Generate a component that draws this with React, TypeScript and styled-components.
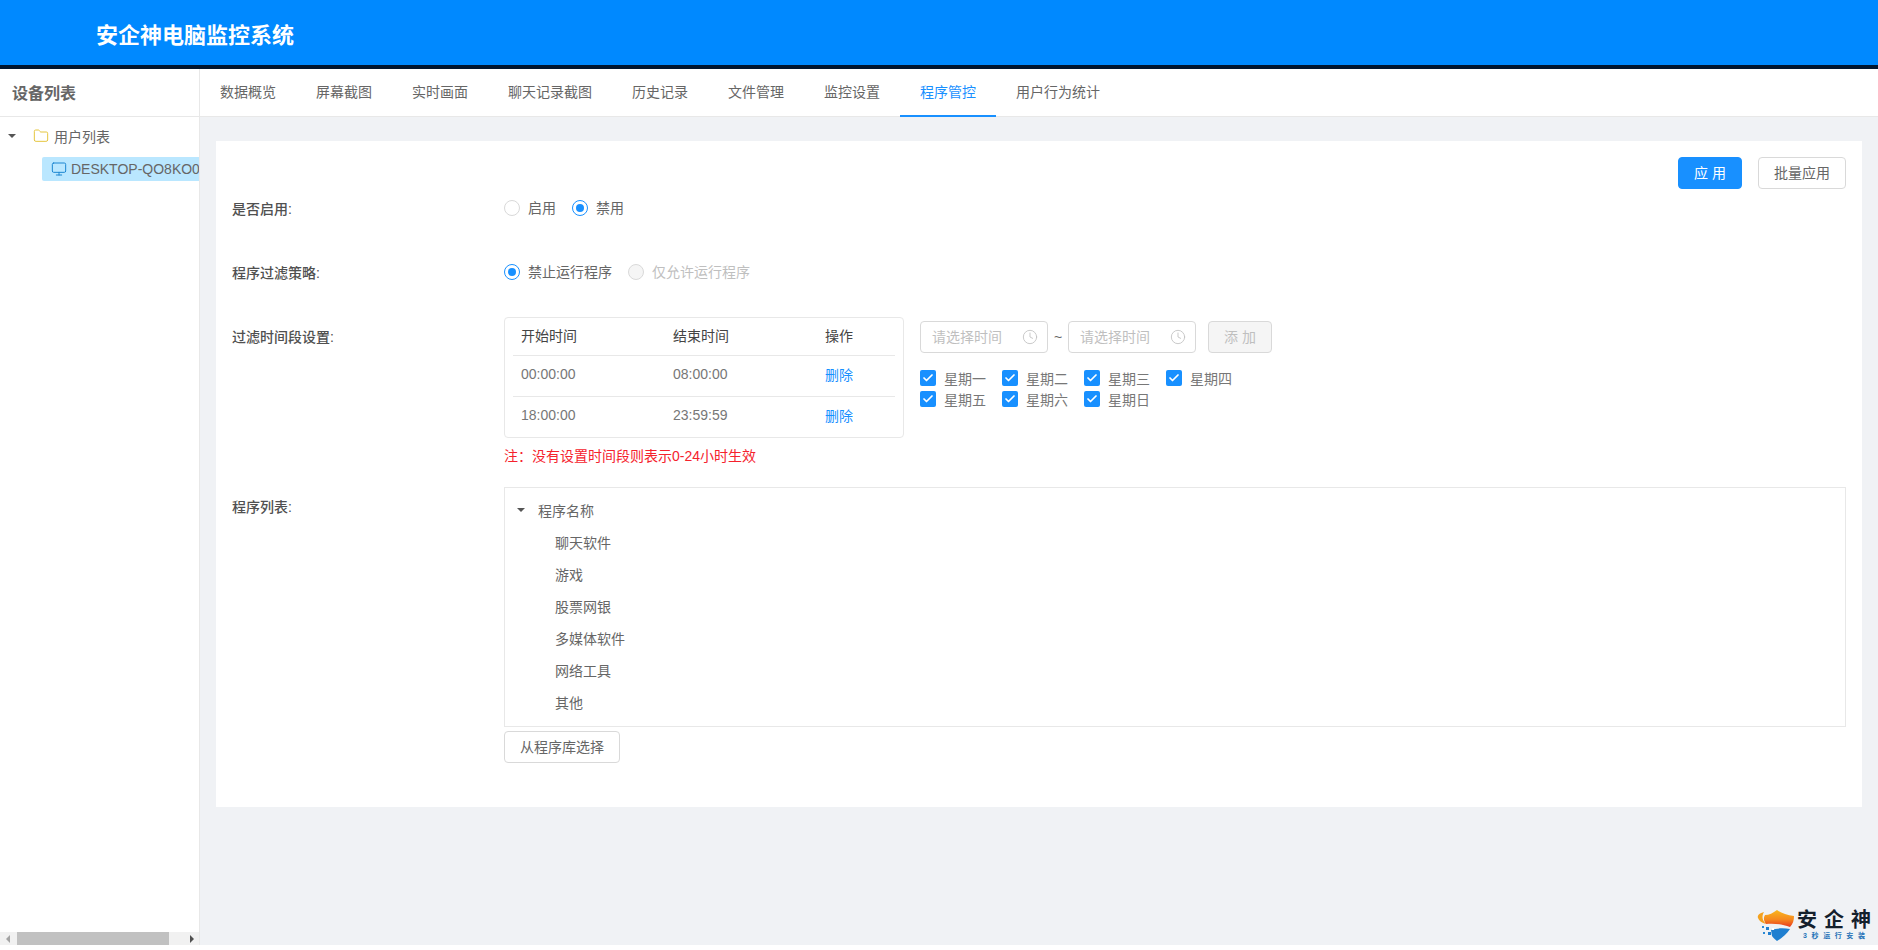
import styled, { createGlobalStyle } from "styled-components";
import { Check, Clock, Folder, Monitor } from "lucide-react";

const GlobalStyle = createGlobalStyle`
  html, body {
    margin: 0;
    padding: 0;
    background: #ffffff;
    overflow: hidden;
  }
  * {
    box-sizing: border-box;
  }
  body {
    font-family: "Liberation Sans", "Noto Sans CJK SC", sans-serif;
    font-size: 14px;
    color: #666666;
  }
`;

const Page = styled.div`
  display: flex;
  flex-direction: column;
  width: 1878px;
  height: 945px;
  position: relative;
`;

const Header = styled.header`
  height: 69px;
  flex: none;
  background: #0089ff;
  border-bottom: 4px solid #00152f;
  padding-left: 96px;
  display: flex;
  align-items: center;
  color: #ffffff;
  font-size: 22px;
  font-weight: 700;
`;

const Body = styled.div`
  flex: 1;
  display: flex;
  min-height: 0;
`;

const Sidebar = styled.aside`
  width: 200px;
  flex: none;
  display: flex;
  flex-direction: column;
  border-right: 1px solid #e8e8e8;
  background: #ffffff;
`;

const SideTitle = styled.div`
  height: 48px;
  flex: none;
  padding: 0 0 2px 12px;
  display: flex;
  align-items: center;
  border-bottom: 1px solid #e8e8e8;
  color: #666666;
  font-size: 16px;
  font-weight: 700;
`;

const Tree = styled.div`
  flex: 1;
  overflow: hidden;
  padding-top: 6px;
`;

const TreeRoot = styled.div`
  height: 26px;
  display: flex;
  align-items: center;
  padding-left: 8px;
  white-space: nowrap;
`;

const Caret = styled.span`
  width: 0;
  height: 0;
  flex: none;
  border-left: 4px solid transparent;
  border-right: 4px solid transparent;
  border-top: 4px solid #555555;
`;

const TreeSelected = styled.div`
  height: 24px;
  margin: 8px 0 0 42px;
  padding-left: 9px;
  display: flex;
  align-items: center;
  gap: 4px;
  background: #bae7ff;
  border-radius: 2px 0 0 2px;
  white-space: nowrap;
  overflow: hidden;
`;

const FolderIcon = styled(Folder)`
  margin: 0 5px 0 17px;
  flex: none;
  color: #e5c63f;
`;

const MonitorIcon = styled(Monitor)`
  flex: none;
  color: #1c86d1;
`;

const HScroll = styled.div`
  height: 13px;
  flex: none;
  background: #f1f1f1;
  display: flex;
  align-items: center;
`;

const ScrollThumb = styled.div`
  width: 152px;
  height: 13px;
  background: #c1c1c1;
`;

const ScrollArrow = styled.span<{ $right?: boolean }>`
  width: 0;
  height: 0;
  margin: ${(p) => (p.$right ? "0 5px 0 auto" : "0 7px 0 6px")};
  border-top: 4px solid transparent;
  border-bottom: 4px solid transparent;
  ${(p) =>
    p.$right
      ? "border-left: 4px solid #505050;"
      : "border-right: 4px solid #a3a3a3;"}
`;

const Main = styled.main`
  flex: 1;
  min-width: 0;
  background: #f0f2f5;
  display: flex;
  flex-direction: column;
`;

const Tabs = styled.nav`
  height: 48px;
  flex: none;
  display: flex;
  background: #ffffff;
  border-bottom: 1px solid #e8e8e8;
`;

const Tab = styled.div<{ $active?: boolean }>`
  height: 48px;
  padding: 0 20px 2px;
  display: flex;
  align-items: center;
  color: ${(p) => (p.$active ? "#1890ff" : "#666666")};
  border-bottom: 2px solid ${(p) => (p.$active ? "#1890ff" : "transparent")};
`;

const Card = styled.section`
  margin: 24px 16px 0 16px;
  height: 666px;
  background: #ffffff;
  padding: 16px 16px 0;
`;

const Toolbar = styled.div`
  display: flex;
  justify-content: flex-end;
  gap: 16px;
  height: 32px;
`;

const Button = styled.button<{ $primary?: boolean; $disabled?: boolean }>`
  height: 32px;
  padding: 0 15px 3px;
  border-radius: 4px;
  border: 1px solid ${(p) => (p.$primary ? "#1890ff" : "#d9d9d9")};
  background: ${(p) =>
    p.$primary ? "#1890ff" : p.$disabled ? "#f5f5f5" : "#ffffff"};
  color: ${(p) =>
    p.$primary ? "#ffffff" : p.$disabled ? "#bfbfbf" : "#666666"};
  font-family: inherit;
  font-size: 14px;
  white-space: nowrap;
`;

const Row = styled.div<{ $top: number }>`
  display: grid;
  grid-template-columns: 272px 1fr;
  margin-top: ${(p) => p.$top}px;
`;

const Label = styled.div<{ $tall?: boolean }>`
  height: ${(p) => (p.$tall ? "38px" : "32px")};
  display: flex;
  align-items: center;
  color: #505050;
  font-weight: 500;
  font-size: 14px;
`;

const Options = styled.div`
  display: flex;
  align-items: center;
  height: 32px;
  gap: 16px;
`;

const Option = styled.label<{ $disabled?: boolean }>`
  display: flex;
  align-items: center;
  gap: 8px;
  padding-bottom: 2px;
  color: ${(p) => (p.$disabled ? "#bfbfbf" : "#666666")};
`;

const Radio = styled.span<{ $checked?: boolean; $disabled?: boolean }>`
  width: 16px;
  height: 16px;
  margin-top: 2px;
  border-radius: 50%;
  flex: none;
  border: 1px solid ${(p) => (p.$checked ? "#1890ff" : "#d9d9d9")};
  background: ${(p) => (p.$disabled ? "#f5f5f5" : "#ffffff")};
  display: flex;
  align-items: center;
  justify-content: center;
  &::after {
    content: "";
    width: 8px;
    height: 8px;
    border-radius: 50%;
    background: ${(p) => (p.$checked ? "#1890ff" : "transparent")};
  }
`;

const TimeArea = styled.div`
  display: flex;
  gap: 16px;
`;

const TableBox = styled.div`
  width: 400px;
  height: 121px;
  border: 1px solid #e8e8e8;
  border-radius: 4px;
  padding: 0 8px;
`;

const TableRow = styled.div<{ $head?: boolean }>`
  display: grid;
  grid-template-columns: 152px 152px 1fr;
  align-items: center;
  height: ${(p) => (p.$head ? "37px" : "41px")};
  padding: 0 0 ${(p) => (p.$head ? "3px" : "4px")} 8px;
  color: ${(p) => (p.$head ? "#444444" : "#777777")};
  & + & {
    border-top: 1px solid #e8e8e8;
  }
`;

const DeleteLink = styled.a`
  color: #1890ff;
`;

const Note = styled.div`
  margin-top: 8px;
  height: 20px;
  line-height: 20px;
  color: #f5222d;
`;

const Schedule = styled.div`
  padding-top: 4px;
`;

const PickerRow = styled.div`
  display: flex;
  align-items: center;
`;

const Picker = styled.div`
  width: 128px;
  height: 32px;
  border: 1px solid #d9d9d9;
  border-radius: 4px;
  padding: 0 9px 3px 11px;
  display: flex;
  align-items: center;
  justify-content: space-between;
  color: #bfbfbf;
`;

const ClockIcon = styled(Clock)`
  margin-top: 3px;
`;

const Tilde = styled.span`
  width: 20px;
  text-align: center;
  color: #666666;
`;

const AddButton = styled(Button)`
  margin-left: 12px;
  width: 64px;
  padding: 0 0 3px;
`;

const Days = styled.div`
  width: 340px;
  margin-top: 15px;
  display: flex;
  flex-wrap: wrap;
  row-gap: 1px;
`;

const Day = styled.label`
  width: 82px;
  height: 20px;
  display: flex;
  align-items: center;
  gap: 8px;
  color: #777777;
`;

const Checkbox = styled.span`
  width: 16px;
  height: 16px;
  flex: none;
  border-radius: 2px;
  background: #1890ff;
  color: #ffffff;
  display: flex;
  align-items: center;
  justify-content: center;
`;

const ListBox = styled.div`
  height: 240px;
  border: 1px solid #e8e8e8;
  padding-top: 6px;
`;

const ListHead = styled.div`
  height: 32px;
  padding-left: 12px;
  display: flex;
  align-items: center;
  gap: 13px;
`;

const ListItem = styled.div`
  height: 32px;
  padding-left: 50px;
  display: flex;
  align-items: center;
`;

const PickButton = styled(Button)`
  display: block;
  margin-top: 4px;
`;

const Brand = styled.div`
  position: absolute;
  right: 7px;
  bottom: 4px;
  display: flex;
  align-items: flex-start;
  gap: 3px;
`;

const BrandText = styled.div`
  display: flex;
  flex-direction: column;
  align-items: center;
  width: 74px;
`;

const BrandName = styled.div`
  color: #14202c;
  font-size: 20px;
  line-height: 22px;
  font-weight: 700;
  letter-spacing: 7px;
  margin-right: -7px;
`;

const BrandSlogan = styled.div`
  color: #2673b8;
  font-size: 7px;
  line-height: 10px;
  letter-spacing: 4.6px;
  margin-right: -4.6px;
  font-weight: 700;
`;

const tabs = ["数据概览", "屏幕截图", "实时画面", "聊天记录截图", "历史记录", "文件管理", "监控设置", "程序管控", "用户行为统计"];
const days = ["星期一", "星期二", "星期三", "星期四", "星期五", "星期六", "星期日"];
const programs = ["聊天软件", "游戏", "股票网银", "多媒体软件", "网络工具", "其他"];
const periods = [
  ["00:00:00", "08:00:00"],
  ["18:00:00", "23:59:59"],
];

const BrandLogo = () => (
  <svg width="37" height="32" viewBox="0 0 37 32">
    <defs>
      <linearGradient id="shieldTop" x1="0" y1="0" x2="0" y2="1">
        <stop offset="0" stopColor="#f9b81e" />
        <stop offset="0.55" stopColor="#f68a1f" />
        <stop offset="1" stopColor="#e9381f" />
      </linearGradient>
    </defs>
    <path d="M8 6 C12 6 16 4 20 1 C24 4 30 6 37 7 C37 11 36 15 33 18 C25 15 16 14 9 15 C7 12 6 9 8 6 Z" fill="url(#shieldTop)" />
    <path d="M7 3 C3 4 0 6 1 9 C2 12 5 14 9 15 C6 12 4 8 7 3 Z" fill="#f4a21f" />
    <path d="M14 21 C20 19 27 19 33 20 C30 25 25 29 20 32 C18 30 16 29 15 27 Z" fill="#1f7fd0" />
    <rect x="5" y="17" width="2" height="2" fill="#2b8ad6" />
    <rect x="9" y="18" width="3" height="3" fill="#1f7fd0" />
    <rect x="6" y="23" width="2" height="2" fill="#2b8ad6" />
    <rect x="11" y="23" width="3" height="3" fill="#1f7fd0" />
    <rect x="15" y="19" width="2" height="2" fill="#ffffff" />
  </svg>
);

const App = () => {
  return (
    <Page>
      <GlobalStyle />
      <Header>安企神电脑监控系统</Header>
      <Body>
        <Sidebar>
          <SideTitle>设备列表</SideTitle>
          <Tree>
            <TreeRoot>
              <Caret />
              <FolderIcon size={16} strokeWidth={1.5} />
              用户列表
            </TreeRoot>
            <TreeSelected>
              <MonitorIcon size={16} strokeWidth={1.5} />
              DESKTOP-QO8KO0JQ
            </TreeSelected>
          </Tree>
          <HScroll>
            <ScrollArrow />
            <ScrollThumb />
            <ScrollArrow $right />
          </HScroll>
        </Sidebar>
        <Main>
          <Tabs>
            {tabs.map((t) => (
              <Tab key={t} $active={t === "程序管控"}>{t}</Tab>
            ))}
          </Tabs>
          <Card>
            <Toolbar>
              <Button $primary>应 用</Button>
              <Button>批量应用</Button>
            </Toolbar>
            <Row $top={3}>
              <Label>是否启用:</Label>
              <Options>
                <Option><Radio />启用</Option>
                <Option><Radio $checked />禁用</Option>
              </Options>
            </Row>
            <Row $top={32}>
              <Label>程序过滤策略:</Label>
              <Options>
                <Option><Radio $checked />禁止运行程序</Option>
                <Option $disabled><Radio $disabled />仅允许运行程序</Option>
              </Options>
            </Row>
            <Row $top={29}>
              <Label $tall>过滤时间段设置:</Label>
              <div>
                <TimeArea>
                  <TableBox>
                    <TableRow $head>
                      <span>开始时间</span>
                      <span>结束时间</span>
                      <span>操作</span>
                    </TableRow>
                    {periods.map(([from, to]) => (
                      <TableRow key={from}>
                        <span>{from}</span>
                        <span>{to}</span>
                        <DeleteLink>删除</DeleteLink>
                      </TableRow>
                    ))}
                  </TableBox>
                  <Schedule>
                    <PickerRow>
                      <Picker>请选择时间<ClockIcon size={16} strokeWidth={1.25} /></Picker>
                      <Tilde>~</Tilde>
                      <Picker>请选择时间<ClockIcon size={16} strokeWidth={1.25} /></Picker>
                      <AddButton $disabled>添 加</AddButton>
                    </PickerRow>
                    <Days>
                      {days.map((d) => (
                        <Day key={d}>
                          <Checkbox><Check size={12} strokeWidth={3.5} /></Checkbox>
                          {d}
                        </Day>
                      ))}
                    </Days>
                  </Schedule>
                </TimeArea>
                <Note>注：没有设置时间段则表示0-24小时生效</Note>
              </div>
            </Row>
            <Row $top={21}>
              <Label $tall>程序列表:</Label>
              <div>
                <ListBox>
                  <ListHead><Caret />程序名称</ListHead>
                  {programs.map((p) => (
                    <ListItem key={p}>{p}</ListItem>
                  ))}
                </ListBox>
                <PickButton>从程序库选择</PickButton>
              </div>
            </Row>
          </Card>
        </Main>
      </Body>
      <Brand>
        <BrandLogo />
        <BrandText>
          <BrandName>安企神</BrandName>
          <BrandSlogan>3秒运行安装</BrandSlogan>
        </BrandText>
      </Brand>
    </Page>
  );
};

export default App;
